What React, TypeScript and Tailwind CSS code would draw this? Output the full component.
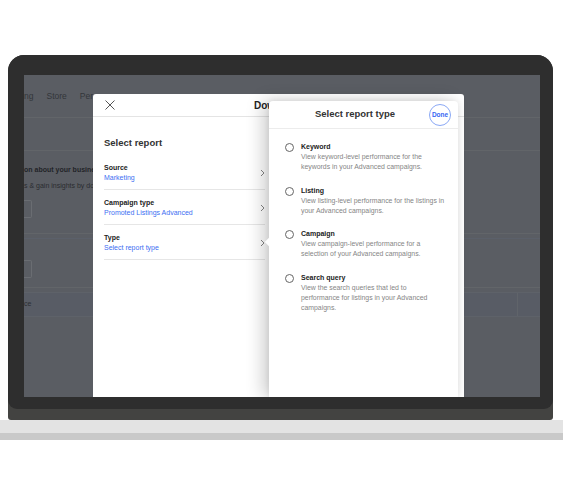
import React from "react";

const Chevron = () => (
  <svg width="5" height="8" viewBox="0 0 5 8" className="shrink-0">
    <path d="M1 1 L4 4 L1 7" fill="none" stroke="#777" strokeWidth="0.9" />
  </svg>
);

const Row = ({ label, value }: { label: string; value: string }) => (
  <div className="flex items-center justify-between border-b border-[#e6e6e6] pt-[8px] pb-[7px]">
    <div>
      <div className="text-[7px] leading-[9.5px] font-bold text-[#222]">{label}</div>
      <div className="text-[7px] leading-[9.5px] text-[#3d6ef2]">{value}</div>
    </div>
    <Chevron />
  </div>
);

const Option = ({ title, lines }: { title: string; lines: string[] }) => (
  <div className="flex gap-[7px]">
    <div className="mt-[1px] w-[9px] h-[9px] rounded-full border border-[#666] shrink-0" />
    <div>
      <div className="text-[7px] leading-[10px] font-bold text-[#222]">{title}</div>
      {lines.map((l) => (
        <div key={l} className="text-[6.9px] leading-[10px] text-[#858585] whitespace-nowrap">
          {l}
        </div>
      ))}
    </div>
  </div>
);

export default function App() {
  return (
    <div className="w-[563px] h-[486px] bg-white overflow-hidden pt-[55px] font-['Liberation_Sans',Arial,sans-serif]">
      <div className="ml-[8px] w-[545px] rounded-t-[16px] rounded-b-[3px] bg-[#434341] pb-[11px]">
        <div className="h-[354px] rounded-t-[16px] rounded-b-[9px] bg-[#2e2e2e] pt-[20px] pl-[16px] pr-[13px]">
          {/* Screen */}
          <div className="relative w-[516px] h-[322px] bg-[#5a5d63] overflow-hidden">
            {/* Background page (dimmed) */}
            <div className="flex flex-col">
              <div className="h-[42px] w-[69px] overflow-hidden flex items-center gap-[13px] pt-[1px] text-[8.5px] text-[#33363a] whitespace-nowrap">
                <span>ng</span>
                <span>Store</span>
                <span>Performance</span>
              </div>
              <div className="h-px bg-[#626569]" />
              <div className="h-[32px]" />
              <div className="h-px bg-[#626569]" />
              <div className="h-[13px]" />
              <div className="w-[69px] overflow-hidden text-[7px] leading-[12px] font-bold text-[#222428] whitespace-nowrap">on about your business</div>
              <div className="h-[4px]" />
              <div className="w-[69px] overflow-hidden text-[7px] leading-[12px] text-[#2a2c30] whitespace-nowrap">s &amp; gain insights by downloading</div>
              <div className="h-[8px]" />
              <div className="h-[18px] w-[8px] border border-l-0 border-[#6a6d72] rounded-r-[2px]" />
              <div className="h-[15px]" />
              <div className="h-px bg-[#626569]" />
              <div className="h-[4px]" />
              <div className="h-px bg-[#5b606a]" />
              <div className="h-[21px]" />
              <div className="h-[18px] w-[8px] border border-l-0 border-[#6a6d72] rounded-r-[2px]" />
              <div className="h-[9px]" />
              <div className="h-px bg-[#626569]" />
              <div className="h-[4px]" />
              <div className="h-[25px] bg-[#585c65] flex items-center text-[7px] text-[#2c2e33] border-t border-b border-[#5e6269]">
                <span>ce</span>
                <div className="ml-auto mr-[22px] h-full w-px bg-[#60646a]" />
              </div>
            </div>

            {/* Modal */}
            <div className="absolute left-[69px] top-[19px] w-[371px] bottom-0 bg-white rounded-t-[3px]">
              <div className="h-[23px] border-b border-[#e4e4e4] flex items-center">
                <svg width="10" height="10" viewBox="0 0 10 10" className="ml-[12px]">
                  <path d="M0.5 0.5 L9.5 9.5 M9.5 0.5 L0.5 9.5" stroke="#555" strokeWidth="1" />
                </svg>
                <span className="ml-[139px] text-[10px] font-bold text-[#222] whitespace-nowrap">Download report</span>
              </div>
              <div className="w-[176px] pl-[11px] pr-[4px] pt-[20px]">
                <div className="text-[9.5px] leading-[12px] font-bold text-[#333] mb-[6px]">Select report</div>
                <Row label="Source" value="Marketing" />
                <Row label="Campaign type" value="Promoted Listings Advanced" />
                <Row label="Type" value="Select report type" />
              </div>

              {/* Drawer panel */}
              <div className="absolute left-[176px] top-[7px] w-[189px] bottom-0 bg-white rounded-t-[4px] shadow-[-6px_0_18px_rgba(0,0,0,0.2),0_0_6px_rgba(0,0,0,0.08)]">
                <div className="absolute -left-[3px] top-[138px] w-[6px] h-[6px] bg-white rotate-45" />
                <div className="relative h-[28px] flex items-center border-b-[1.5px] border-[#ececec]">
                  <div className="flex-1 pl-[12px] text-center text-[9.5px] font-bold text-[#333] whitespace-nowrap">
                    Select report type
                  </div>
                  <div className="mr-[7px] w-[22px] h-[22px] rounded-full border-[1.5px] border-[#8aa8f5] flex items-center justify-center text-[6.5px] font-bold text-[#3665f3]">
                    Done
                  </div>
                </div>
                <div className="pl-[16px] pt-[13px] flex flex-col gap-[13.5px]">
                  <Option
                    title="Keyword"
                    lines={["View keyword-level performance for the", "keywords in your Advanced campaigns."]}
                  />
                  <Option
                    title="Listing"
                    lines={["View listing-level performance for the listings in", "your Advanced campaigns."]}
                  />
                  <Option
                    title="Campaign"
                    lines={["View campaign-level performance for a", "selection of your Advanced campaigns."]}
                  />
                  <Option
                    title="Search query"
                    lines={[
                      "View the search queries that led to",
                      "performance for listings in your Advanced",
                      "campaigns.",
                    ]}
                  />
                </div>
              </div>
            </div>
          </div>
        </div>
      </div>
      <div className="h-[13px] bg-[#e3e3e3]" />
      <div className="h-[7px] bg-[#c9c9c9]" />
    </div>
  );
}
